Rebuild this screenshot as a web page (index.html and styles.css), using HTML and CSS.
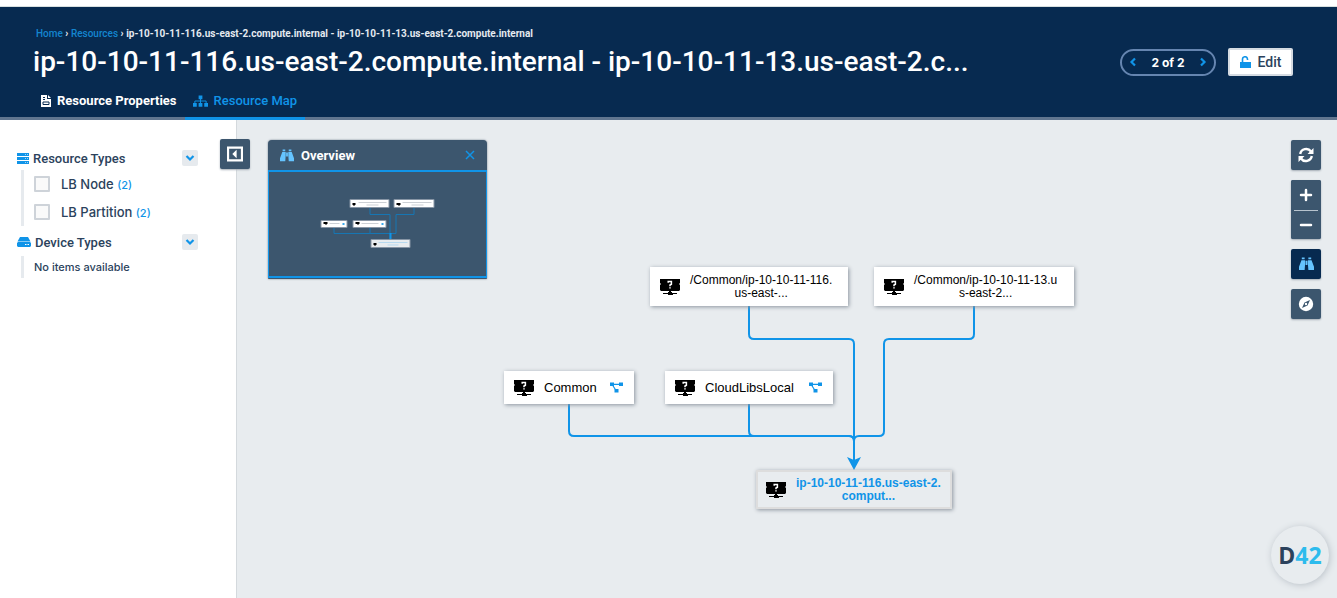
FILE: index.html
```html
<!DOCTYPE html>
<html lang="en">
<head>
<meta charset="utf-8">
<title>Resource Map</title>
<link rel="stylesheet" href="styles.css">
</head>
<body>
<svg class="defs" aria-hidden="true">
  <symbol id="binoculars" viewBox="0 0 16 14"><path d="M3 0h3v2H3zM10 0h3v2h-3zM2.600 3H6.500v4L6 13.500H0V10zM13.400 3H9.500v4l.5 6.500h6V10zM7 3.500h2V8H7z"/></symbol>
  <symbol id="chevron" viewBox="0 0 10 10"><path d="M1.500 3 5 6.500 8.500 3" fill="none" stroke="currentColor" stroke-width="2.200"/></symbol>
  <symbol id="monitor" viewBox="0 0 20 16"><path d="M0 0h20v4.500h-1v1h1V11l-1 1h-8v1h1v1h5v1h-4v1H8v-1H3v-1h5v-1h1v-1H1l-1-1V5.500h1v-1H0z"/><path d="M8.200 3.800V2.600h3.200v2.600L10 6v1.200M10 8.200v1.300" fill="none" stroke="#fff" stroke-width="1.500"/></symbol>
  <symbol id="branch" viewBox="0 0 13 10"><path d="M0 0h4v3.500H0zM9 0h4v3.500H9zM4.500 6.500h4V10h-4z"/><path d="M3 1.800h7M2.500 2.500 6 8" fill="none" stroke="currentColor" stroke-width="1.200"/></symbol>
</svg>
<header class="header">
  <div class="heading">
    <nav class="crumbs" aria-label="Breadcrumb"><a href="#">Home</a> <b>›</b> <a href="#">Resources</a> <b>›</b> <span>ip-10-10-11-116.us-east-2.compute.internal - ip-10-10-11-13.us-east-2.compute.internal</span></nav>
    <h1 class="title">ip-10-10-11-116.us-east-2.compute.internal - ip-10-10-11-13.us-east-2.c...</h1>
    <nav class="tabs">
      <a class="tab" href="#"><svg class="doc" viewBox="0 0 10 12"><path fill="currentColor" d="M0 0h6v4h4v8H0zM7 0l3 3H7z"/><path d="M2 2.500h2M2 4.500h2M2 7h6v2.500H2z" stroke="#072a50" fill="none"/></svg>Resource Properties</a>
      <a class="tab active" href="#"><svg class="tree" viewBox="0 0 16 12"><path fill="currentColor" d="M6 0h4v4H6zM0 8h4v4H0zM6 8h4v4H6zM12 8h4v4h-4z"/><path d="M8 3v6M2 9V6h12v3" stroke="currentColor" fill="none"/></svg>Resource Map</a>
    </nav>
  </div>
  <div class="actions">
    <div class="pager"><button aria-label="Previous"><svg class="left"><use href="#chevron"/></svg></button><span>2 of 2</span><button aria-label="Next"><svg class="right"><use href="#chevron"/></svg></button></div>
    <button class="edit"><svg viewBox="0 0 11 12"><path fill="currentColor" d="M0 6h11v6H0z"/><path d="M2.500 6V3.500a2.500 2.500 0 0 1 5-.5v1" fill="none" stroke="currentColor" stroke-width="1.600"/></svg>Edit</button>
  </div>
</header>
<div class="main">
  <aside class="sidebar">
    <section class="group">
      <div class="group-head"><svg class="server" viewBox="0 0 12 11"><path fill="currentColor" d="M0 0h12v3H0zM0 4h12v3H0zM0 8h12v3H0z"/><path d="M8 1.500h3M8 5.500h3M8 9.500h3" stroke="#fff" stroke-dasharray="1 1" opacity=".6"/></svg><h2>Resource Types</h2><button class="toggle" aria-label="Collapse resource types"><svg><use href="#chevron"/></svg></button></div>
      <div class="items">
        <label class="item"><input type="checkbox"><span>LB Node <small>(2)</small></span></label>
        <label class="item"><input type="checkbox"><span>LB Partition <small>(2)</small></span></label>
      </div>
    </section>
    <section class="group">
      <div class="group-head"><svg class="drive" viewBox="0 0 14 10"><path fill="currentColor" d="M3 0h8l2.500 4.500h-13zM1 5h12l1 1v3l-1 1H1L0 9V6z"/><path d="M8 7.500h4" stroke="#fff" stroke-dasharray="1.500 1"/></svg><h2>Device Types</h2><button class="toggle" aria-label="Collapse device types"><svg><use href="#chevron"/></svg></button></div>
      <div class="items empty">No items available</div>
    </section>
  </aside>
  <main class="canvas">
    <svg class="edges" viewBox="237 120 1100 478"><g fill="none" stroke="#1094e8" stroke-width="2"><path d="M749 306v28q0 5 5 5h95q5 0 5 5v116"/><path d="M974 306v28q0 5-5 5h-80q-5 0-5 5v87q0 5-5 5h-20q-5 0-5 5v20"/><path d="M569 404v27q0 5 5 5h275q5 0 5 5v20"/><path d="M749 404v27q0 5 5 5h95q5 0 5 5v20"/></g><path fill="#1094e8" d="m847 457 7 3 7-3-7 13z"/></svg>
    <div class="node n1"><svg><use href="#monitor"/></svg><span>/Common/ip-10-10-11-116.<br>us-east-...</span></div>
    <div class="node n2"><svg><use href="#monitor"/></svg><span>/Common/ip-10-10-11-13.u<br>s-east-2...</span></div>
    <div class="node short n3"><svg><use href="#monitor"/></svg><span>Common</span><svg class="branch"><use href="#branch"/></svg></div>
    <div class="node short n4"><svg><use href="#monitor"/></svg><span>CloudLibsLocal</span><svg class="branch"><use href="#branch"/></svg></div>
    <div class="node n5"><svg><use href="#monitor"/></svg><span>ip-10-10-11-116.us-east-2.<br>comput...</span></div>
    <button class="tool collapse" aria-label="Collapse sidebar"><svg viewBox="0 0 15 14"><path fill="none" stroke="currentColor" stroke-width="2" d="M1 1h13v12H1z"/><path fill="currentColor" d="M9 3v8L5 7z"/></svg></button>
    <section class="overview">
      <div class="overview-head"><svg class="bino"><use href="#binoculars"/></svg><h2>Overview</h2><button aria-label="Close overview"><svg viewBox="0 0 10 10"><path d="m1 1 8 8M9 1 1 9" stroke="currentColor" stroke-width="1.500"/></svg></button></div>
      <svg class="minimap" viewBox="269 172 216 104">
        <g fill="none" stroke="#1676b3"><path d="M369.500 208v6.500h20v25M413.500 208v6.500h-18v19h-6M333.500 228v5.500h56M369.500 228v5.500"/><path d="M390 233v6" stroke="#1094e8" stroke-width="2"/></g>
        <g fill="#fff" stroke="#8795a5"><path d="M349.500 199.500h39v8h-39zM393.500 199.500h40v8h-40zM320.500 220.500h26v7h-26zM352.500 220.500h33v7h-33z"/><path fill="#e8ecef" d="M370.500 239.500h39v8h-39z"/></g>
        <path fill="#000" d="M352 203h3v2h-1v1h-1v-1h-1zM396 203h4v2h-1v1h-1v-1h-2zM323 222h4v2h-1v1h-1v-1h-2zM355 222h4v2h-1v1h-1v-1h-2zM373 243h3v2h-1v1h-1v-1h-1z"/>
        <path stroke="#ccd0d5" d="M358 202.500h28M366 205h12M402 202.500h29M411 205h12M329 223.500h10M361 223.500h17"/><path stroke="#b7d9ef" d="M378 242.500h29M387 245h11"/><path fill="#3aa9ed" d="M342 223h2v2h-2zM381 223h2v2h-2z"/>
      </svg>
    </section>
    <div class="tools">
      <button class="tool" aria-label="Refresh"><svg viewBox="0 0 16 16"><path d="M2.200 7A6 6 0 0 1 13 4.500M13.800 9A6 6 0 0 1 3 11.500" fill="none" stroke="currentColor" stroke-width="2.400"/><path fill="currentColor" d="M15.500 1v6h-6zM.5 15V9h6z"/></svg></button>
      <div class="zoom"><button class="tool" aria-label="Zoom in"><svg viewBox="0 0 16 16"><path d="M3 8h10M8 3v10" stroke="currentColor" stroke-width="2.500" stroke-linecap="round"/></svg></button><button class="tool" aria-label="Zoom out"><svg viewBox="0 0 16 16"><path d="M3 8h10" stroke="currentColor" stroke-width="2.500" stroke-linecap="round"/></svg></button></div>
      <button class="tool on" aria-label="Overview"><svg class="bino"><use href="#binoculars"/></svg></button>
      <button class="tool" aria-label="Navigate"><svg viewBox="0 0 16 16"><circle cx="8" cy="8" r="7.200" fill="currentColor"/><path fill="#3c566e" d="m12 4-2.500 5.500L4 12l2.500-5.500z"/><circle cx="8" cy="8" r="1.200" fill="currentColor"/></svg></button>
    </div>
    <button class="badge"><span>D</span>42</button>
  </main>
</div>
</body>
</html>
```
FILE: styles.css
```css
* { box-sizing: border-box; }
body { margin: 0; min-height: 100vh; display: flex; flex-direction: column; font-family: Roboto, sans-serif; color: #2b425c; background: #fff; }
button { border: 0; padding: 0; background: none; font: inherit; color: inherit; display: flex; align-items: center; justify-content: center; cursor: pointer; }
a { text-decoration: none; color: inherit; }
h1, h2 { margin: 0; }
svg { fill: currentColor; flex: none; display: block; }
.defs { position: absolute; width: 0; height: 0; }
.header { margin-top: 6px; border-top: 1px solid #d8e0e0; background: #072a50; color: #fff; border-bottom: 3px solid #60758f; display: flex; justify-content: space-between; padding: 19px 44px 0 33px; }
.heading { min-width: 0; }
.crumbs { font-size: 10px; font-weight: 700; line-height: 16px; padding-left: 3px; white-space: nowrap; color: #e4e9ef; }
.crumbs a { color: #1485cf; font-weight: 500; }
.title { font-size: 28px; line-height: 40px; font-weight: 500; white-space: nowrap; }
.tabs { display: flex; margin-top: 3px; margin-bottom: -3px; font-size: 13px; font-weight: 700; line-height: 32px; }
.tab { display: flex; align-items: center; gap: 6px; padding: 0 8px; border-bottom: 3px solid transparent; }
.tab.active { color: #1094e8; border-color: #1094e8; font-weight: 500; }
.doc { width: 10px; height: 12px; }
.tree { width: 15px; height: 12px; }
.actions { display: flex; gap: 12px; align-items: center; height: 28px; margin-top: 22px; }
.pager { width: 96px; height: 27px; border: 2px solid #6585b0; border-radius: 14px; display: flex; align-items: center; justify-content: space-between; padding: 0 6px; font: 700 12px Inter, sans-serif; }
.pager svg { width: 10px; height: 10px; color: #1094e8; }
.left { transform: rotate(90deg); }
.right { transform: rotate(-90deg); }
.edit { width: 65px; height: 28px; background: #fff; color: #2b425c; border: 2px solid #d5dbe2; border-radius: 2px; gap: 7px; font-size: 14px; font-weight: 500; }
.edit svg { width: 11px; height: 12px; color: #1094e8; }
.main { flex: 1; display: flex; }
.sidebar { width: 237px; flex: none; border-right: 1px solid #d4d9dd; padding: 28px 38px 0 17px; }
.group { margin-bottom: 6px; }
.group-head { display: flex; align-items: center; gap: 4px; height: 20px; }
.group h2 { font-size: 13px; font-weight: 500; flex: 1; }
.server { width: 12px; height: 11px; color: #1094e8; }
.drive { width: 14px; height: 10px; color: #1094e8; }
.toggle { width: 16px; height: 16px; background: #e6eaee; border-radius: 2px; color: #1094e8; }
.toggle svg { width: 10px; height: 10px; }
.items { margin-left: 4px; margin-top: 2px; border-left: 3px solid #e6eaee; }
.item { display: flex; align-items: center; height: 28px; gap: 11px; padding-left: 10px; font: 500 13px Inter, sans-serif; }
.item small { font-size: 11px; color: #1094e8; }
.item input { appearance: none; margin: 0; width: 16px; height: 16px; border: 2px solid #ced3d9; border-radius: 1px; background: #fafafa; }
.empty { padding-left: 10px; margin-top: 4px; font: 500 11px/22px Inter, sans-serif; }
.canvas { flex: 1; position: relative; background: #e8ecef; overflow: hidden; }
.edges { position: absolute; left: 0; top: 0; width: 1100px; height: 478px; }
.node { position: absolute; display: flex; align-items: center; gap: 10px; padding-left: 10px; height: 39px; background: #fff; color: #000; box-shadow: 1px 1px 4px #8b949e; font: 12px/13px "Liberation Sans", sans-serif; text-align: center; white-space: nowrap; }
.node.short { height: 33px; font-size: 13px; }
.node svg { width: 20px; height: 16px; }
.node .branch { width: 13px; height: 11px; color: #1094e8; margin-left: auto; margin-right: 11px; }
.n1 { left: 413px; top: 147px; width: 198px; }
.n2 { left: 637px; top: 147px; width: 200px; }
.n3 { left: 267px; top: 251px; width: 130px; }
.n4 { left: 428px; top: 251px; width: 168px; }
.n5 { left: 519px; top: 350px; width: 196px; padding-left: 8px; background: #e8ecef; border: 2px solid #ddd; }
.n5 span { color: #1094e8; font-weight: 700; }
.tool { width: 30px; height: 30px; background: #3c566e; color: #fff; border-radius: 2px; box-shadow: 0 1px 2px #a4adb5; }
.tool svg { width: 16px; height: 16px; }
.collapse { position: fixed; left: 220px; top: 139px; }
.bino { color: #65c4ff; }
.tool .bino { width: 15px; height: 14px; }
.tool.on { background: #072a50; }
.overview { position: absolute; left: 31px; top: 20px; width: 219px; background: #3c566e; border-radius: 4px 4px 1px 1px; box-shadow: 0 0 2px #687787; color: #fff; padding-bottom: 1px; }
.overview-head { display: flex; align-items: center; height: 30px; gap: 7px; padding: 0 12px; }
.overview-head .bino { width: 14px; height: 13px; }
.overview h2 { font-size: 13px; flex: 1; }
.overview button { color: #1094e8; width: 10px; height: 10px; }
.minimap { width: 219px; height: 108px; border: solid #1094e8; border-width: 2px 1px; }
.tools { position: absolute; right: 16px; top: 20px; display: flex; flex-direction: column; gap: 10px; }
.zoom { background: #3c566e; border-radius: 2px; box-shadow: 0 1px 2px #a4adb5; }
.zoom .tool { box-shadow: none; height: 29px; }
.zoom .tool:first-child { height: 30px; }
.zoom .tool + .tool::before { content: ""; position: absolute; width: 24px; height: 1px; margin-bottom: 29px; background: #b7c3ce; }
.badge { position: absolute; right: 8px; bottom: 14px; width: 58px; height: 58px; border-radius: 50%; background: #e8ecef; box-shadow: 1px 1px 7px #bac1c8; color: #2dbbed; font: 700 23px "Open Sans", sans-serif; }
.badge span { color: #2b425c; }
```
